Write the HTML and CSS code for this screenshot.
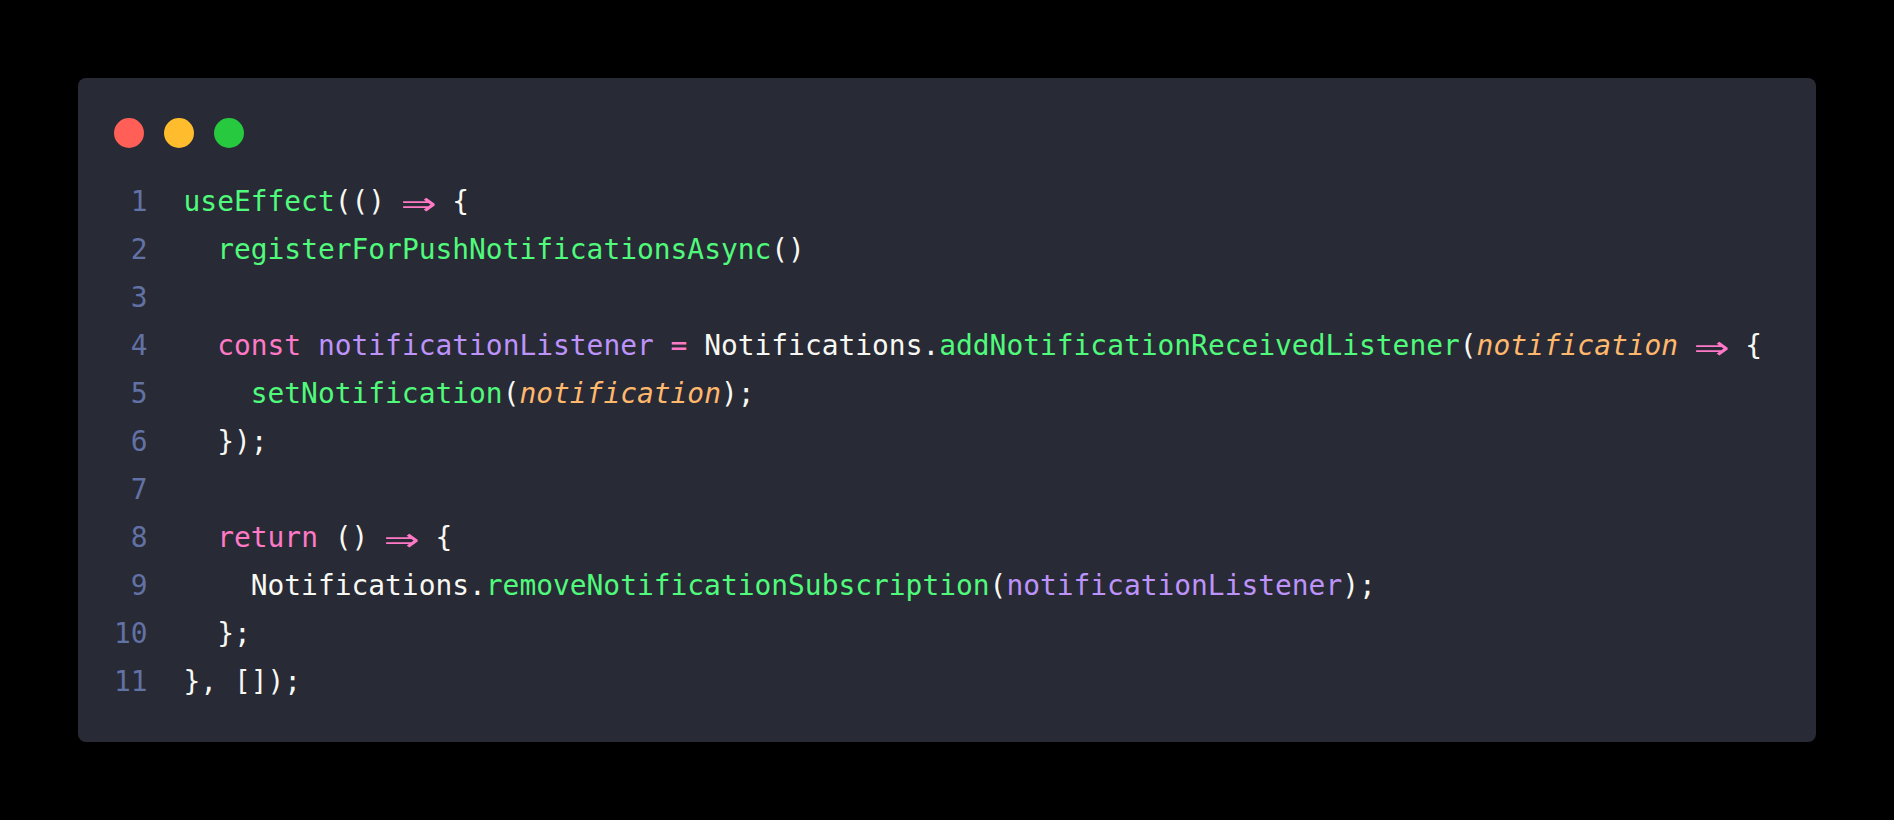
FILE: index.html
```html
<!DOCTYPE html>
<html lang="en">
<head>
<meta charset="utf-8">
<title>Code</title>
<link rel="stylesheet" href="styles.css">
</head>
<body>
<div class="window">
  <div class="dots">
    <span class="dot red"></span>
    <span class="dot yellow"></span>
    <span class="dot green"></span>
  </div>
  <div class="code">
    <div class="line"><span class="ln">1</span><span class="src"><span class="fn">useEffect</span>(() <span class="arrow">⇒</span> {</span></div>
    <div class="line"><span class="ln">2</span><span class="src">  <span class="fn">registerForPushNotificationsAsync</span>()</span></div>
    <div class="line"><span class="ln">3</span><span class="src"> </span></div>
    <div class="line"><span class="ln">4</span><span class="src">  <span class="kw">const</span> <span class="var">notificationListener</span> <span class="kw">=</span> Notifications.<span class="fn">addNotificationReceivedListener</span>(<span class="param">notification</span> <span class="arrow">⇒</span> {</span></div>
    <div class="line"><span class="ln">5</span><span class="src">    <span class="fn">setNotification</span>(<span class="param">notification</span>);</span></div>
    <div class="line"><span class="ln">6</span><span class="src">  });</span></div>
    <div class="line"><span class="ln">7</span><span class="src"> </span></div>
    <div class="line"><span class="ln">8</span><span class="src">  <span class="kw">return</span> () <span class="arrow">⇒</span> {</span></div>
    <div class="line"><span class="ln">9</span><span class="src">    Notifications.<span class="fn">removeNotificationSubscription</span>(<span class="var">notificationListener</span>);</span></div>
    <div class="line"><span class="ln">10</span><span class="src">  };</span></div>
    <div class="line"><span class="ln">11</span><span class="src">}, []);</span></div>
  </div>
</div>
</body>
</html>
```

FILE: styles.css
```css
html, body {
  margin: 0;
  padding: 0;
  background: #000;
}

body {
  padding: 78px;
  width: 1894px;
  height: 820px;
  box-sizing: border-box;
}

.window {
  box-sizing: border-box;
  width: 1738px;
  height: 664px;
  background: #282a36;
  border-radius: 8px;
  padding: 40px 36px 36px 36px;
}

.dots {
  display: flex;
  gap: 20px;
  height: 30px;
}

.dot {
  width: 30px;
  height: 30px;
  border-radius: 50%;
}

.red { background: #ff5f56; }
.yellow { background: #ffbd2e; }
.green { background: #27c93f; }

.code {
  margin-top: 30px;
  font-family: "DejaVu Sans Mono", "Liberation Mono", monospace;
  font-size: 27.9px;
  line-height: 48px;
  color: #f8f8f2;
}

.line {
  display: flex;
  height: 48px;
}

.ln {
  width: 2ch;
  text-align: right;
  color: #6272a4;
  margin-right: 36px;
  flex: none;
}

.src {
  white-space: pre;
}

.fn { color: #50fa7b; }
.kw { color: #ff79c6; }
.var { color: #bd93f9; }
.param { color: #ffb86c; font-style: italic; }

.arrow {
  display: inline-block;
  width: 2ch;
  text-align: center;
  color: #ff79c6;
  transform: scale(2.1, 1.5);
}
```
